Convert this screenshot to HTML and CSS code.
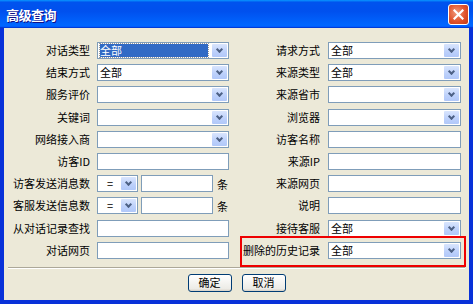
FILE: index.html
```html
<!DOCTYPE html>
<html>
<head>
	<meta charset="UTF-8">
	<title>高级查询</title>
	<link rel="stylesheet" href="styles.css">
</head>
<body>
	<div class="window">
		<div class="titlebar">
			<span class="title">高级查询</span>
			<span class="close">
				<svg width="11" height="11" viewBox="0 0 11 11"><path d="M1.5 1.5 L9.5 9.5 M9.5 1.5 L1.5 9.5" stroke="#fff" stroke-width="2.2" stroke-linecap="square"/></svg>
			</span>
		</div>
		<div class="body">
			<div class="form">
				<label class="lbl">对话类型</label>
				<div class="combo"><span class="val"><span class="hl">全部</span></span><span class="arrow"></span></div>
				<label class="lbl">请求方式</label>
				<div class="combo"><span class="val">全部</span><span class="arrow"></span></div>

				<label class="lbl">结束方式</label>
				<div class="combo"><span class="val">全部</span><span class="arrow"></span></div>
				<label class="lbl">来源类型</label>
				<div class="combo"><span class="val">全部</span><span class="arrow"></span></div>

				<label class="lbl">服务评价</label>
				<div class="combo"><span class="val"></span><span class="arrow"></span></div>
				<label class="lbl">来源省市</label>
				<div class="combo"><span class="val"></span><span class="arrow"></span></div>

				<label class="lbl">关键词</label>
				<div class="combo"><span class="val"></span><span class="arrow"></span></div>
				<label class="lbl">浏览器</label>
				<div class="combo"><span class="val"></span><span class="arrow"></span></div>

				<label class="lbl">网络接入商</label>
				<div class="combo"><span class="val"></span><span class="arrow"></span></div>
				<label class="lbl">访客名称</label>
				<input class="text" type="text">

				<label class="lbl">访客ID</label>
				<input class="text" type="text">
				<label class="lbl">来源IP</label>
				<input class="text" type="text">

				<label class="lbl">访客发送消息数</label>
				<div class="count">
					<div class="combo small"><span class="val">=</span><span class="arrow"></span></div>
					<input class="text num" type="text">
					<span class="unit">条</span>
				</div>
				<label class="lbl">来源网页</label>
				<input class="text" type="text">

				<label class="lbl">客服发送信息数</label>
				<div class="count">
					<div class="combo small"><span class="val">=</span><span class="arrow"></span></div>
					<input class="text num" type="text">
					<span class="unit">条</span>
				</div>
				<label class="lbl">说明</label>
				<input class="text" type="text">

				<label class="lbl">从对话记录查找</label>
				<input class="text" type="text">
				<label class="lbl">接待客服</label>
				<div class="combo"><span class="val">全部</span><span class="arrow"></span></div>

				<label class="lbl">对话网页</label>
				<input class="text" type="text">
				<label class="lbl">删除的历史记录</label>
				<div class="combo"><span class="val">全部</span><span class="arrow"></span></div>
			</div>
			<div class="sep"></div>
			<div class="buttons">
				<button type="button">确定</button>
				<button type="button">取消</button>
			</div>
		</div>
		<!-- 红框标注 -->
		<div class="mark"></div>
	</div>
</body>
</html>
```

FILE: styles.css
```css
body {
	margin: 0;
	padding: 0;
	font-family: "Noto Sans CJK SC", "DejaVu Sans", sans-serif;
	font-size: 11px;
	color: #000;
}
.window {
	position: relative;
	width: 473px;
	height: 304px;
	box-sizing: border-box;
	background-color: #0831d9;
	display: flex;
	flex-direction: column;
	overflow: hidden;
}
.titlebar {
	height: 28px;
	flex: none;
	display: flex;
	align-items: center;
	justify-content: space-between;
	padding: 0 4px 0 6px;
	background: linear-gradient(180deg, #0997ff, #0053ee 8%, #0050ee 40%, #06f 88%, #06f 93%, #005bff 95%, #003dd7 96%, #003dd7);
}
.title {
	color: #fff;
	font-size: 13px;
	font-weight: bold;
	text-shadow: 1px 1px #0f1089;
	letter-spacing: -0.5px;
}
.close {
	width: 19px;
	height: 19px;
	border: 1px solid #fff;
	border-radius: 3px;
	display: flex;
	align-items: center;
	justify-content: center;
	background: radial-gradient(circle at 40% 40%, #f09a7c, #e0532c 55%, #c23a16);
}
.body {
	flex: 1;
	margin: 0 4px 4px 4px;
	background-color: #ece9d8;
	padding-top: 14px;
	display: flex;
	flex-direction: column;
}
.form {
	display: grid;
	grid-template-columns: 93px 132px 99px 133px;
	grid-auto-rows: 17px;
	row-gap: 5.2px;
	align-items: center;
}
.lbl {
	text-align: right;
	padding-right: 7px;
	white-space: nowrap;
	line-height: 17px;
}
.form .lbl:nth-child(4n+3) {
	padding-right: 8px;
}
.combo {
	height: 17px;
	box-sizing: border-box;
	border: 1px solid #7f9db9;
	background-color: #fff;
	display: flex;
	align-items: stretch;
}
.val {
	flex: 1;
	padding: 1px 2px;
	line-height: 13px;
	white-space: nowrap;
}
.hl {
	display: block;
	height: 13px;
	margin-right: 1px;
	background-color: #316ac5;
	color: #fff;
	outline: 1px dotted #999;
}
.arrow {
	width: 15px;
	margin: 1px;
	border-radius: 1px;
	background: linear-gradient(180deg, #d9e5fd, #bcd0fb 60%, #b1c8f9);
	display: flex;
	align-items: center;
	justify-content: center;
}
.arrow::after {
	content: "";
	width: 3px;
	height: 3px;
	border-right: 2px solid #4d6185;
	border-bottom: 2px solid #4d6185;
	transform: translateY(-1px) rotate(45deg);
}
.text {
	height: 17px;
	box-sizing: border-box;
	border: 1px solid #7f9db9;
	background-color: #fff;
	margin: 0;
	padding: 0 2px;
	font-size: 11px;
	outline: none;
}
.count {
	display: flex;
	align-items: center;
}
.combo.small {
	width: 41px;
}
.combo.small .val {
	padding-left: 9px;
}
.text.num {
	width: 72px;
	margin-left: 3px;
}
.unit {
	margin-left: 4px;
}
.sep {
	margin: 8px 4px 0 4px;
	border-top: 1px solid #aca899;
	border-bottom: 1px solid #fff;
}
.buttons {
	display: flex;
	justify-content: center;
	gap: 10px;
	margin-top: 5px;
}
button {
	width: 44px;
	height: 18px;
	padding: 0;
	border: 1px solid #003c74;
	border-radius: 3px;
	background: linear-gradient(180deg, #fff, #ecebe6 86%, #d6d0c5);
	font-family: "Noto Sans CJK SC", "DejaVu Sans", sans-serif;
	font-size: 11px;
	line-height: 15px;
	color: #000;
}
.mark {
	position: absolute;
	left: 240px;
	top: 236px;
	width: 226px;
	height: 31px;
	box-sizing: border-box;
	border: 2px solid #e00;
}
```
